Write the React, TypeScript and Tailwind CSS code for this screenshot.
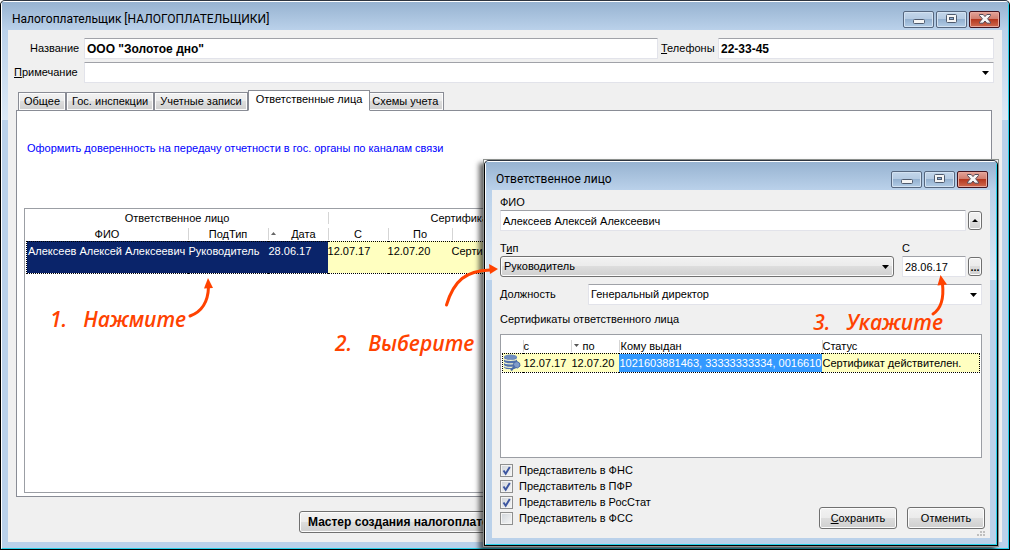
import { useState, type ReactNode } from 'react';
import clsx from 'clsx';

const fieldClass =
  'min-w-0 border border-[#e2e3ea] border-t-[#a0a2a8] rounded-[1px] bg-white px-[2px] outline-none';
const buttonClass =
  'border border-[#707070] rounded-[3px] shadow-[inset_0_0_0_1px_#fcfcfc] bg-[linear-gradient(#f2f2f2_0%,#ebebeb_50%,#dddddd_50%,#cfcfcf_100%)]';

const tabs = ['Общее', 'Гос. инспекции', 'Учетные записи', 'Ответственные лица', 'Схемы учета'];

const roles = [
  { id: 'fns', label: 'Представитель в ФНС', checked: true },
  { id: 'pfr', label: 'Представитель в ПФР', checked: true },
  { id: 'rosstat', label: 'Представитель в РосСтат', checked: true },
  { id: 'fss', label: 'Представитель в ФСС', checked: false },
];

function WindowButtons() {
  const base = 'w-[31px] h-[17px] flex items-center justify-center border rounded-[2px]';
  const blue =
    'border-[#56677f] shadow-[inset_0_0_0_1px_#d3e2f2] bg-[linear-gradient(#c3d6ea_0%,#b4cae2_50%,#94b1d0_50%,#b2cce6_100%)]';
  return (
    <div className="flex gap-[2px]">
      <button aria-label="Свернуть" className={clsx(base, blue)}>
        <svg width="12" height="12" viewBox="0 0 12 12">
          <rect x="0.500" y="6.500" width="11" height="4" rx="1" fill="#f5f5f5" stroke="#4f5b6e" />
        </svg>
      </button>
      <button aria-label="Развернуть" className={clsx(base, blue)}>
        <svg width="12" height="12" viewBox="0 0 12 12">
          <rect x="0.500" y="1.500" width="10" height="8" rx="1" fill="#f5f5f5" stroke="#4f5b6e" />
          <rect x="3.500" y="4.500" width="4" height="2" fill="#8fb0d6" stroke="#4f5b6e" />
        </svg>
      </button>
      <button
        aria-label="Закрыть"
        className={clsx(
          base,
          'border-[#43141f] shadow-[inset_0_0_0_1px_#e8a99d] bg-[linear-gradient(#e3a399_0%,#d07c6c_48%,#b5381f_50%,#cf6a50_100%)]',
        )}
      >
        <svg width="12" height="12" viewBox="0 0 12 12">
          <path
            d="M0.500 1.500h3.700L6 3.600l1.800-2.100h3.700v1L8.600 5.800l2.900 3.400v1H7.800L6 8l-1.800 2.200H0.500v-1l2.900-3.400L0.500 2.500z"
            fill="#f7f7f7"
            stroke="#544a57"
          />
        </svg>
      </button>
    </div>
  );
}

// Стеклянная рамка окна в стиле Windows 7
function WindowFrame({ title, children }: { title: string; children: ReactNode }) {
  return (
    <div className="w-full h-full flex flex-col border border-t-[#2e3540] border-black rounded-t-[5px] bg-[#bad1ea] overflow-hidden">
      <div className="flex-1 min-h-0 flex flex-col border border-t-white border-l-white border-r-[#27cfe8] border-b-[#27cfe8] rounded-t-[4px]">
        <header className="h-7 flex-none flex items-center justify-between pl-[10px] pr-2 bg-[linear-gradient(#97b3d1,#bad1ea)]">
          <h1 className="pt-[6px] leading-4 font-[Roboto,sans-serif] text-[12px] text-black">{title}</h1>
          <div className="pt-[6px]">
            <WindowButtons />
          </div>
        </header>
        <div className="flex-1 min-h-0 flex px-[6px] pb-[6px] bg-no-repeat bg-[linear-gradient(#bad1ea,#dce9f6)] bg-[length:100%_90px]">
          <div className="flex-1 min-w-0 flex flex-col bg-[#f0f0f0]">{children}</div>
        </div>
      </div>
    </div>
  );
}

function ComboArrow() {
  return (
    <svg className="absolute right-[5px] top-[9px] pointer-events-none" width="7" height="4" viewBox="0 0 7 4">
      <path d="M0 0h7L3.500 4z" fill="#000" />
    </svg>
  );
}

function HeadCell({ children, line = true, className }: { children?: ReactNode; line?: boolean; className?: string }) {
  return (
    <div className={clsx('h-3 leading-3 whitespace-nowrap', line && 'border-l border-[#d5d5d5]', className)}>
      {children}
    </div>
  );
}

function DatabaseIcon() {
  return (
    <svg width="18" height="17" viewBox="0 0 18 17">
      <path d="M1 3v10c0 3 13 3 13 0V3z" fill="#5273ad" />
      <ellipse cx="7.500" cy="3" rx="6.500" ry="2.500" fill="#6f8dc0" />
      <path
        d="M1 4.500c1 2.500 12 2.500 13 0M1 8c1 2.500 12 2.500 13 0M1 11.500c1 2.500 12 2.500 13 0"
        fill="none"
        stroke="#f4f4d0"
        strokeWidth="1.200"
      />
      <path d="M8 16.500l4-4.500" stroke="#4a6aa5" strokeWidth="2" />
      <path d="M11 8.500l3-1 2.500 1.500 0.500 3-2.500 2-3-1-1-2.500z" fill="#7f9bc9" stroke="#4a6aa5" />
    </svg>
  );
}

function MainTable() {
  return (
    <table className="w-full table-fixed border-collapse">
      <colgroup>
        <col className="w-[161px]" />
        <col className="w-[80px]" />
        <col className="w-[60px]" />
        <col className="w-[60px]" />
        <col className="w-[64px]" />
        <col />
      </colgroup>
      <thead>
        <tr className="h-4">
          <th colSpan={3} className="p-0 pt-[2px] font-normal">
            <HeadCell line={false}>Ответственное лицо</HeadCell>
          </th>
          <th colSpan={3} className="p-0 pt-[2px] font-normal text-left">
            <HeadCell className="pl-[102px]">Сертификат</HeadCell>
          </th>
        </tr>
        <tr className="h-4">
          <th className="p-0 pt-[2px] font-normal">
            <HeadCell line={false}>ФИО</HeadCell>
          </th>
          <th className="p-0 pt-[2px] font-normal">
            <HeadCell>ПодТип</HeadCell>
          </th>
          <th className="p-0 pt-[2px] font-normal">
            <HeadCell className="flex items-center justify-between pl-[2px] pr-3">
              <svg width="5" height="3" viewBox="0 0 5 3">
                <path d="M0 3h5L2.500 0z" fill="#666" />
              </svg>
              Дата
            </HeadCell>
          </th>
          <th className="p-0 pt-[2px] font-normal">
            <HeadCell>С</HeadCell>
          </th>
          <th className="p-0 pt-[2px] font-normal">
            <HeadCell>По</HeadCell>
          </th>
          <th className="p-0 pt-[2px] font-normal">
            <HeadCell />
          </th>
        </tr>
      </thead>
      <tbody>
        <tr className="h-8 border border-dotted border-black align-top leading-[18px] whitespace-nowrap">
          <td className="p-0 pl-px bg-[#0a246a] text-white">Алексеев Алексей Алексеевич</td>
          <td className="p-0 pl-px bg-[#0a246a] text-white">Руководитель</td>
          <td className="p-0 pl-px bg-[#0a246a] text-white">28.06.17</td>
          <td className="p-0 bg-[#ffffc0]">12.07.17</td>
          <td className="p-0 bg-[#ffffc0]">12.07.20</td>
          <td className="p-0 bg-[#ffffc0]">Сертиф.</td>
        </tr>
      </tbody>
    </table>
  );
}

function CertificateTable() {
  return (
    <table className="w-full table-fixed border-collapse">
      <colgroup>
        <col className="w-5" />
        <col className="w-[48px]" />
        <col className="w-[48px]" />
        <col className="w-[203px]" />
        <col />
      </colgroup>
      <thead>
        <tr className="h-[18px] text-left">
          <th className="p-0" aria-label="Значок" />
          <th className="p-0 pt-1 font-normal">
            <HeadCell>с</HeadCell>
          </th>
          <th className="p-0 pt-1 font-normal">
            <HeadCell className="flex items-center gap-1 pl-[2px]">
              <svg width="5" height="3" viewBox="0 0 5 3">
                <path d="M0 0h5L2.500 3z" fill="#555" />
              </svg>
              по
            </HeadCell>
          </th>
          <th className="p-0 pt-1 font-normal">
            <HeadCell className="pl-px">Кому выдан</HeadCell>
          </th>
          <th className="p-0 pt-1 font-normal">
            <HeadCell>Статус</HeadCell>
          </th>
        </tr>
      </thead>
      <tbody>
        <tr className="h-[19px] border border-dotted border-black bg-[#ffffc0] leading-4 whitespace-nowrap">
          <td className="p-0">
            <DatabaseIcon />
          </td>
          <td className="p-0 pl-px">12.07.17</td>
          <td className="p-0 pl-px">12.07.20</td>
          <td className="p-0 pl-px bg-[#3399ff] text-white overflow-hidden">1021603881463, 33333333334, 0016610</td>
          <td className="p-0 pl-px">Сертификат действителен.</td>
        </tr>
      </tbody>
    </table>
  );
}

function RoleCheckbox({ id, label, initial }: { id: string; label: string; initial: boolean }) {
  const [checked, setChecked] = useState(initial);
  return (
    <div className="h-4 flex items-center gap-[6px]">
      <span className="relative flex">
        <input
          id={id}
          type="checkbox"
          checked={checked}
          onChange={(e) => setChecked(e.target.checked)}
          className="appearance-none w-[13px] h-[13px] border border-[#8e8f8f] bg-[linear-gradient(135deg,#cfd4da,#f6f6f6)] shadow-[inset_0_0_0_1px_#f4f4f4]"
        />
        {checked && (
          <svg className="absolute inset-0 pointer-events-none" width="13" height="13" viewBox="0 0 13 13">
            <path d="M3.500 6.500l2.200 3.200L9.800 3" fill="none" stroke="#3d56a0" strokeWidth="2" />
          </svg>
        )}
      </span>
      <label htmlFor={id}>{label}</label>
    </div>
  );
}

function PersonDialog() {
  return (
    <WindowFrame title="Ответственное лицо">
      <div className="flex-1 flex flex-col px-2 pt-[5px]">
        <label htmlFor="fio" className="leading-[15px]">
          ФИО
        </label>
        <div className="flex items-center gap-[2px]">
          <input id="fio" defaultValue="Алексеев Алексей Алексеевич" className={clsx(fieldClass, 'flex-1 h-[21px]')} />
          <button aria-label="Выбрать" className={clsx(buttonClass, 'w-[14px] h-[19px] flex items-center justify-center')}>
            <svg width="6" height="3" viewBox="0 0 6 3">
              <path d="M0 3h6L3 0z" fill="#000" />
            </svg>
          </button>
        </div>

        <div className="flex items-end gap-2 pt-[10px]">
          <div className="flex-1 flex flex-col">
            <label htmlFor="type" className="leading-[15px]">
              Т<u>и</u>п
            </label>
            <div className="relative">
              <select id="type" className={clsx(buttonClass, 'appearance-none block w-full h-[21px] pl-[3px]')}>
                <option>Руководитель</option>
              </select>
              <ComboArrow />
            </div>
          </div>
          <div className="flex flex-col">
            <label htmlFor="since" className="leading-[15px]">
              С
            </label>
            <div className="flex items-center gap-[2px]">
              <input id="since" defaultValue="28.06.17" className={clsx(fieldClass, 'w-16 h-[21px]')} />
              <button className={clsx(buttonClass, 'w-[14px] h-[19px] font-bold leading-3')}>...</button>
            </div>
          </div>
        </div>

        <div className="flex items-center pt-[7px]">
          <label htmlFor="post" className="w-[88px]">
            <u>Д</u>олжность
          </label>
          <div className="relative flex-1">
            <select id="post" className={clsx(fieldClass, 'appearance-none block w-full h-[21px]')}>
              <option>Генеральный директор</option>
            </select>
            <ComboArrow />
          </div>
        </div>

        <p className="pt-[7px] pb-[7px] leading-[15px]">Сертификаты ответственного лица</p>
        <div className="h-[124px] border border-[#9b9ea4] bg-white px-px">
          <CertificateTable />
        </div>

        <div className="flex items-end justify-between pt-1">
          <div className="flex flex-col">
            {roles.map((role) => (
              <RoleCheckbox key={role.id} id={role.id} label={role.label} initial={role.checked} />
            ))}
          </div>
          <div className="flex gap-[10px] -mr-[3px] -mb-[3px]">
            <button className={clsx(buttonClass, 'w-[78px] h-[22px]')}>
              <u>С</u>охранить
            </button>
            <button className={clsx(buttonClass, 'w-[78px] h-[22px]')}>Отменить</button>
          </div>
        </div>
      </div>
      <svg className="self-end mr-[5px] mb-[2px]" width="8" height="5" viewBox="0 0 8 5">
        <path d="M0 3h2v2H0zM3 3h2v2H3zM6 3h2v2H6zM3 0h2v2H3zM6 0h2v2H6z" fill="#bfbfbf" />
      </svg>
    </WindowFrame>
  );
}

function Note({ number, text }: { number: string; text: string }) {
  return (
    <p className="flex gap-4 font-['Open_Sans',sans-serif] italic font-semibold text-[21px] leading-7 text-[#ff4200] whitespace-nowrap">
      <span>{number}</span>
      <span>{text}</span>
    </p>
  );
}

export default function App() {
  const [activeTab, setActiveTab] = useState('Ответственные лица');

  return (
    <div className="relative h-screen overflow-hidden bg-white font-['Liberation_Sans',sans-serif] text-[11px] text-black">
      <WindowFrame title="Налогоплательщик [НАЛОГОПЛАТЕЛЬЩИКИ]">
        <div className="flex-1 min-h-0 flex flex-col px-2 pt-2">
          <div className="flex items-center">
            <label htmlFor="name" className="w-[68px] pl-[14px]">
              Название
            </label>
            <input
              id="name"
              defaultValue={'ООО "Золотое дно"'}
              className={clsx(fieldClass, 'flex-1 h-[21px] font-bold text-[12px]')}
            />
            <label htmlFor="phones" className="w-[60px] pl-[3px]">
              <u>Т</u>елефоны
            </label>
            <input
              id="phones"
              defaultValue="22-33-45"
              className={clsx(fieldClass, 'w-[276px] h-[21px] font-bold text-[12px]')}
            />
          </div>
          <div className="flex items-center pt-[3px]">
            <label htmlFor="note" className="w-[68px] -ml-[2px] mr-[2px]">
              <u>П</u>римечание
            </label>
            <div className="relative flex-1">
              <select id="note" className={clsx(fieldClass, 'appearance-none block w-full h-[21px]')}>
                <option></option>
              </select>
              <ComboArrow />
            </div>
          </div>

          <div role="tablist" className="relative flex items-end h-[21px] mt-[7px] pl-[2px] -mb-px">
            {tabs.map((tab) => (
              <button
                key={tab}
                role="tab"
                aria-selected={tab === activeTab}
                onClick={() => setActiveTab(tab)}
                className={clsx(
                  'border border-[#898c95] whitespace-nowrap',
                  tab === activeTab
                    ? 'relative z-10 h-[21px] px-[7px] -mr-[4px] pb-[2px] border-b-white bg-white'
                    : 'h-[19px] px-[5px] shadow-[inset_0_0_0_1px_#fcfcfc] bg-[linear-gradient(#f2f2f2_0%,#ebebeb_50%,#dddddd_50%,#cfcfcf_100%)]',
                )}
              >
                {tab}
              </button>
            ))}
          </div>
          <div className="flex-1 min-h-0 flex flex-col mr-[2px] px-[7px] pb-[3px] border border-[#898c95] bg-white">
            <a href="#trust" className="self-start mt-[29px] ml-[3px] leading-4 text-[#0000ff]">
              Оформить доверенность на передачу отчетности в гос. органы по каналам связи
            </a>
            <div className="flex-1 mt-[52px] border border-[#9b9ea4] bg-white pl-px">
              <MainTable />
            </div>
          </div>
          <div className="pb-[9px] pt-[14px] pl-[283px]">
            <button className={clsx(buttonClass, 'h-[22px] px-2 font-bold text-[12px]')}>
              Мастер создания налогоплательщика
            </button>
          </div>
        </div>
      </WindowFrame>

      {/* окно карточки ответственного лица поверх основного */}
      <div className="absolute right-[11px] top-[159px] bottom-[3px] w-[516px] border border-[#8b8f8c] shadow-[-4px_4px_5px_rgba(0,0,0,0.6)]">
        <PersonDialog />
      </div>

      {/* подсказки со стрелками */}
      <div className="absolute left-[50px] top-[305px]">
        <Note number="1." text="Нажмите" />
      </div>
      <svg className="absolute left-[188px] top-[278px]" width="26" height="40" viewBox="0 0 26 40" fill="none">
        <path d="M2 38C13 34 20 25 20.500 9" stroke="#ff4200" strokeWidth="3" strokeLinecap="round" />
        <path d="M20 0l5 10-9 0.500z" fill="#ff4200" />
      </svg>

      <div className="absolute left-[335px] top-[329px]">
        <Note number="2." text="Выберите" />
      </div>
      <svg className="absolute left-[444px] top-[262px]" width="54" height="46" viewBox="0 0 54 46" fill="none">
        <path d="M2.500 43C10 18 22 9 46 8" stroke="#ff4200" strokeWidth="3" strokeLinecap="round" />
        <path d="M54 7l-9-5 1 10z" fill="#ff4200" />
      </svg>

      <div className="absolute right-[67px] top-[308px]">
        <Note number="3." text="Укажите" />
      </div>
      <svg className="absolute right-[58px] top-[275px]" width="22" height="42" viewBox="0 0 22 42" fill="none">
        <path d="M3 39C12 33 14 23 12.500 9" stroke="#ff4200" strokeWidth="3" strokeLinecap="round" />
        <path d="M10.500 0l6.500 9.500-9.500 1z" fill="#ff4200" />
      </svg>
    </div>
  );
}
